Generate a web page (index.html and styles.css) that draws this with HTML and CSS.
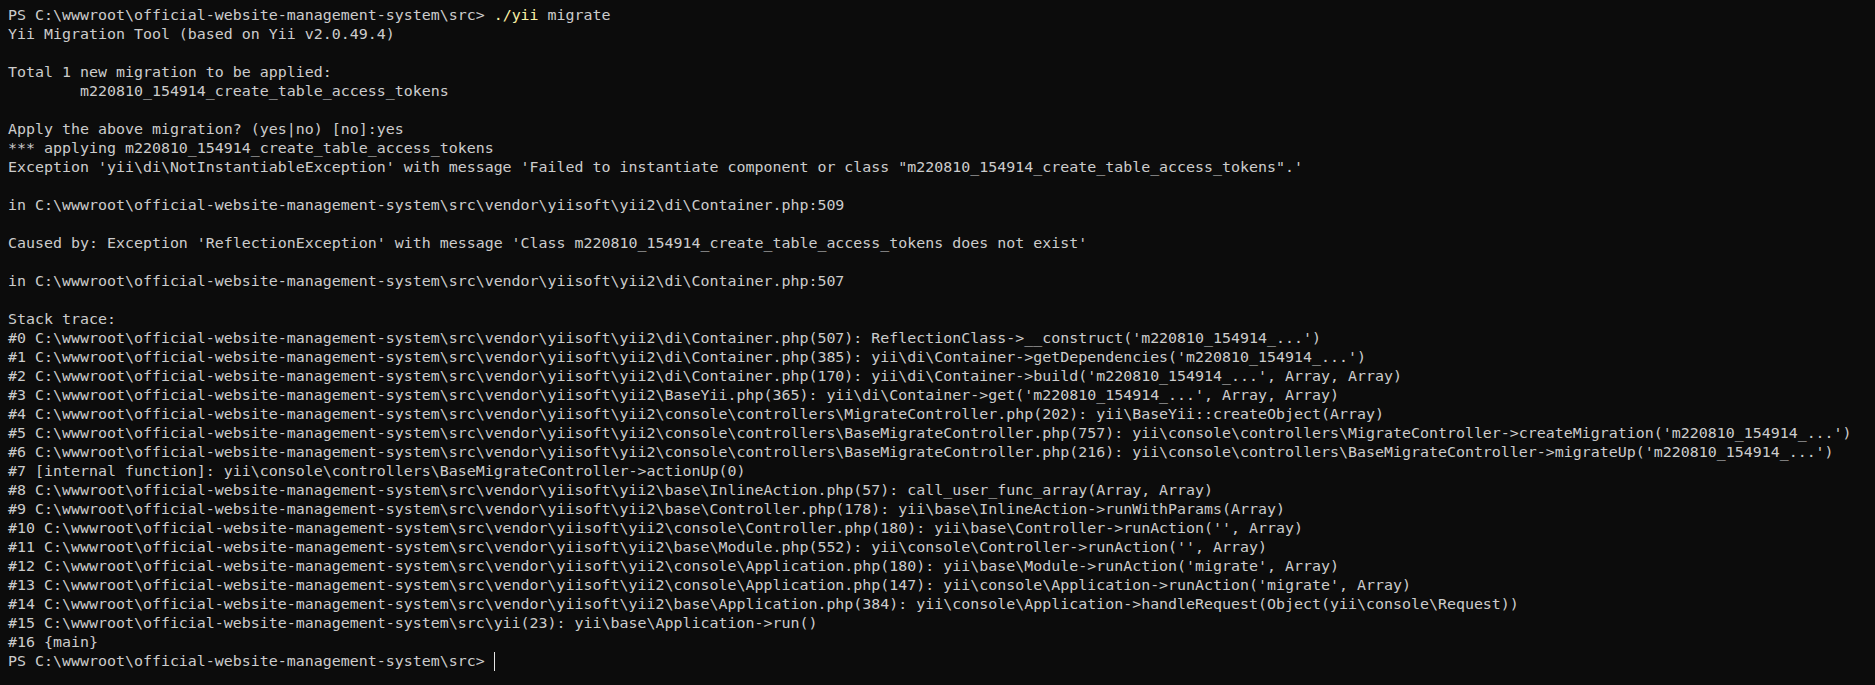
FILE: index.html
```html
<!DOCTYPE html>
<html lang="en">
<head>
<meta charset="utf-8">
<title>Terminal</title>
<link rel="stylesheet" href="styles.css">
</head>
<body>
<pre class="term">PS C:\wwwroot\official-website-management-system\src&gt; <span class="cmd">./yii</span> migrate
Yii Migration Tool (based on Yii v2.0.49.4)

Total 1 new migration to be applied:
        m220810_154914_create_table_access_tokens

Apply the above migration? (yes|no) [no]:yes
*** applying m220810_154914_create_table_access_tokens
Exception 'yii\di\NotInstantiableException' with message 'Failed to instantiate component or class "m220810_154914_create_table_access_tokens".'

in C:\wwwroot\official-website-management-system\src\vendor\yiisoft\yii2\di\Container.php:509

Caused by: Exception 'ReflectionException' with message 'Class m220810_154914_create_table_access_tokens does not exist'

in C:\wwwroot\official-website-management-system\src\vendor\yiisoft\yii2\di\Container.php:507

Stack trace:
#0 C:\wwwroot\official-website-management-system\src\vendor\yiisoft\yii2\di\Container.php(507): ReflectionClass-&gt;__construct('m220810_154914_...')
#1 C:\wwwroot\official-website-management-system\src\vendor\yiisoft\yii2\di\Container.php(385): yii\di\Container-&gt;getDependencies('m220810_154914_...')
#2 C:\wwwroot\official-website-management-system\src\vendor\yiisoft\yii2\di\Container.php(170): yii\di\Container-&gt;build('m220810_154914_...', Array, Array)
#3 C:\wwwroot\official-website-management-system\src\vendor\yiisoft\yii2\BaseYii.php(365): yii\di\Container-&gt;get('m220810_154914_...', Array, Array)
#4 C:\wwwroot\official-website-management-system\src\vendor\yiisoft\yii2\console\controllers\MigrateController.php(202): yii\BaseYii::createObject(Array)
#5 C:\wwwroot\official-website-management-system\src\vendor\yiisoft\yii2\console\controllers\BaseMigrateController.php(757): yii\console\controllers\MigrateController-&gt;createMigration('m220810_154914_...')
#6 C:\wwwroot\official-website-management-system\src\vendor\yiisoft\yii2\console\controllers\BaseMigrateController.php(216): yii\console\controllers\BaseMigrateController-&gt;migrateUp('m220810_154914_...')
#7 [internal function]: yii\console\controllers\BaseMigrateController-&gt;actionUp(0)
#8 C:\wwwroot\official-website-management-system\src\vendor\yiisoft\yii2\base\InlineAction.php(57): call_user_func_array(Array, Array)
#9 C:\wwwroot\official-website-management-system\src\vendor\yiisoft\yii2\base\Controller.php(178): yii\base\InlineAction-&gt;runWithParams(Array)
#10 C:\wwwroot\official-website-management-system\src\vendor\yiisoft\yii2\console\Controller.php(180): yii\base\Controller-&gt;runAction('', Array)
#11 C:\wwwroot\official-website-management-system\src\vendor\yiisoft\yii2\base\Module.php(552): yii\console\Controller-&gt;runAction('', Array)
#12 C:\wwwroot\official-website-management-system\src\vendor\yiisoft\yii2\console\Application.php(180): yii\base\Module-&gt;runAction('migrate', Array)
#13 C:\wwwroot\official-website-management-system\src\vendor\yiisoft\yii2\console\Application.php(147): yii\console\Application-&gt;runAction('migrate', Array)
#14 C:\wwwroot\official-website-management-system\src\vendor\yiisoft\yii2\base\Application.php(384): yii\console\Application-&gt;handleRequest(Object(yii\console\Request))
#15 C:\wwwroot\official-website-management-system\src\yii(23): yii\base\Application-&gt;run()
#16 {main}
PS C:\wwwroot\official-website-management-system\src&gt; <span class="cursor"></span></pre>
</body>
</html>
```

FILE: styles.css
```css
html, body {
  margin: 0;
  padding: 0;
  background: #0c0c0c;
  height: 100%;
  overflow: hidden;
}

.term {
  margin: 0;
  padding: 6px 8px 5px;
  font-family: "DejaVu Sans Mono", "Liberation Mono", monospace;
  font-size: 14.95px;
  line-height: 19px;
  color: #cccccc;
  white-space: pre;
}

.cmd {
  color: #f9f1a5;
}

.cursor {
  display: inline-block;
  width: 1px;
  height: 19px;
  background: #e6e6e6;
  vertical-align: top;
}
```
